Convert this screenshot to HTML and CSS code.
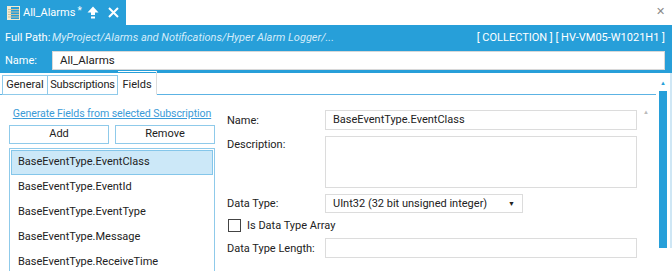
FILE: index.html
```html
<!DOCTYPE html>
<html lang="en">
<head>
    <meta charset="UTF-8">
    <title>All_Alarms</title>
    <link rel="stylesheet" href="styles.css">
</head>
<body>
    <div class="doc-bar">
        <div class="doc-tab">
            <svg class="doc-icon" width="13" height="14" viewBox="0 0 13 14">
                <rect x="0.5" y="0.5" width="12" height="13" fill="none" stroke="#f2ead0"/>
                <rect x="1" y="1" width="3" height="12" fill="#f2ead0"/>
                <path d="M4 3.5h8M4 6h8M4 8.5h8M4 11h8M1 3.5h3M1 6h3M1 8.5h3M1 11h3" stroke="#c9bf9f" stroke-width="1"/>
            </svg>
            <span class="doc-title">All_Alarms</span>
            <span class="doc-dirty">*</span>
            <svg class="doc-btn" width="12" height="13" viewBox="0 0 12 13">
                <path d="M6 0.5L11.5 6.5H8V9H4V6.5H0.5Z" fill="#fff"/>
                <rect x="4" y="10.5" width="4" height="2" fill="#fff"/>
            </svg>
            <svg class="doc-btn" width="11" height="11" viewBox="0 0 11 11">
                <path d="M1 1L10 10M10 1L1 10" stroke="#fff" stroke-width="2"/>
            </svg>
        </div>
        <span class="close-all">&#x2715;</span>
    </div>

    <div class="header">
        <div class="path-row">
            <span class="head-label">Full Path:</span>
            <span class="path">MyProject/Alarms and Notifications/Hyper Alarm Logger/...</span>
            <span class="meta">[ COLLECTION ] [ HV-VM05-W1021H1 ]</span>
        </div>
        <div class="name-row">
            <span class="head-label">Name:</span>
            <div class="name-input">All_Alarms</div>
        </div>
    </div>

    <div class="body-area">
        <div class="main">
            <div class="tab-strip">
                <div class="tab tab-general">General</div>
                <div class="tab tab-subs">Subscriptions</div>
                <div class="tab tab-active">Fields</div>
            </div>
            <div class="content">
                <div class="left-panel">
                    <a class="gen-link" href="#">Generate Fields from selected Subscription</a>
                    <div class="btn-row">
                        <div class="btn">Add</div>
                        <div class="btn">Remove</div>
                    </div>
                    <div class="field-list">
                        <div class="field-item selected">BaseEventType.EventClass</div>
                        <div class="field-item">BaseEventType.EventId</div>
                        <div class="field-item">BaseEventType.EventType</div>
                        <div class="field-item">BaseEventType.Message</div>
                        <div class="field-item">BaseEventType.ReceiveTime</div>
                    </div>
                </div>
                <div class="right-panel">
                    <div class="form-grid">
                        <span class="lbl">Name:</span>
                        <div class="inp">BaseEventType.EventClass</div>
                        <span class="lbl lbl-top">Description:</span>
                        <div class="inp area"></div>
                        <span class="lbl">Data Type:</span>
                        <div class="inp select">UInt32 (32 bit unsigned integer)<span class="caret">&#9660;</span></div>
                        <label class="check-row"><span class="check"></span>Is Data Type Array</label>
                        <span class="lbl">Data Type Length:</span>
                        <div class="inp"></div>
                    </div>
                    <span class="inner-arrow">&#9650;</span>
                </div>
            </div>
        </div>
        <div class="scrollbar">
            <span class="scroll-arrow">&#9650;</span>
            <div class="scroll-thumb"></div>
        </div>
    </div>
</body>
</html>
```

FILE: styles.css
```css
body {
    margin: 0;
    width: 672px;
    height: 271px;
    overflow: hidden;
    background: #fff;
    font-family: Roboto, "Open Sans", sans-serif;
    font-size: 11px;
    color: #333;
    white-space: nowrap;
}

/* document tab bar */
.doc-bar {
    height: 25px;
    display: flex;
    justify-content: space-between;
}

.doc-tab {
    width: 126px;
    box-sizing: border-box;
    background: #279fd9;
    display: flex;
    align-items: center;
    padding-left: 7px;
    color: #fff;
}

.doc-tab > * {
    flex-shrink: 0;
}

.doc-icon {
    margin-right: 3px;
}

.doc-title {
    font-size: 11px;
}

.doc-dirty {
    font-size: 10px;
    align-self: flex-start;
    margin: 5px 0 0 2px;
}

.doc-btn {
    margin-left: 5px;
}

.doc-btn + .doc-btn {
    margin-left: 9px;
}

.close-all {
    color: #8a8a8a;
    font-size: 11px;
    margin: 5px 7px 0 0;
}

/* blue header */
.header {
    background: #279fd9;
    color: #fff;
    padding: 0 7px 3px 5px;
}

.path-row {
    height: 25px;
    display: flex;
    align-items: center;
}

.head-label {
    width: 47px;
    flex-shrink: 0;
}

.path {
    font-style: italic;
    color: #d3ecfa;
}

.meta {
    margin-left: auto;
}

.name-row {
    display: flex;
    align-items: center;
    padding-top: 1px;
}

.name-input {
    flex: 1;
    height: 19px;
    box-sizing: border-box;
    background: #fff;
    border: 1px solid #d8d8d8;
    color: #222;
    padding: 1px 7px;
    font-size: 11.5px;
}

/* tabbed area */
.body-area {
    display: flex;
}

.main {
    width: 656px;
}

.tab-strip {
    height: 22px;
    display: flex;
    align-items: flex-end;
    padding-left: 2px;
    border-bottom: 1px solid #5cb3e4;
    box-sizing: border-box;
}

.tab {
    height: 20px;
    box-sizing: border-box;
    border: 1px solid #8fcaea;
    padding-top: 2px;
    margin-bottom: -1px;
    text-align: center;
    color: #222;
}

.tab + .tab {
    border-left: none;
}

.tab-general {
    width: 46px;
}

.tab-subs {
    width: 70px;
    letter-spacing: -0.2px;
}

.tab-active {
    width: 39px;
    height: 24px;
    border-color: #fff #dcdcdc #fff #fff;
    padding-top: 6px;
}

.content {
    display: flex;
}

.left-panel {
    width: 206px;
    margin-left: 9px;
    display: flex;
    flex-direction: column;
}

.gen-link {
    margin-top: 11px;
    text-align: center;
    color: #3b9bd8;
    font-size: 10.6px;
    line-height: 15px;
    letter-spacing: -0.1px;
}

.btn-row {
    display: flex;
    gap: 6px;
    margin-top: 4px;
}

.btn {
    flex: 1;
    height: 19px;
    box-sizing: border-box;
    border: 1px solid #8fcaea;
    text-align: center;
    line-height: 16px;
    color: #222;
}

.field-list {
    margin-top: 4px;
    height: 124px;
    border: 1px solid #8fcaea;
    border-bottom: none;
    padding: 1px;
    overflow: hidden;
}

.field-item {
    height: 25px;
    box-sizing: border-box;
    line-height: 24px;
    padding-left: 7px;
    color: #222;
}

.field-item.selected {
    background: #cce8f8;
    border: 1px solid #84c6ea;
    padding-left: 6px;
    line-height: 22px;
}

.right-panel {
    position: relative;
    margin-left: 12px;
    margin-top: 15px;
}

.form-grid {
    display: grid;
    grid-template-columns: 98px 312px;
    row-gap: 6px;
    align-items: center;
}

.lbl {
    color: #222;
}

.lbl-top {
    align-self: start;
    padding-top: 2px;
}

.inp {
    height: 20px;
    box-sizing: border-box;
    border: 1px solid #dcdcdc;
    padding: 2px 7px 0;
    color: #222;
}

.area {
    height: 52px;
}

.select {
    width: 198px;
    height: 19px;
    padding-top: 2px;
    display: flex;
    justify-content: space-between;
}

.caret {
    font-size: 7px;
    line-height: 14px;
    color: #222;
}

.check-row {
    grid-column: 1 / 3;
    display: flex;
    align-items: center;
    color: #222;
    height: 13px;
}

.check {
    width: 11px;
    height: 11px;
    border: 1px solid #444;
    margin: 0 6px 0 1px;
    background: #fff;
}

.inner-arrow {
    position: absolute;
    left: 416px;
    top: -2px;
    font-size: 6px;
    color: #bbb;
}

/* page scrollbar */
.scrollbar {
    width: 16px;
    height: 175px;
    display: flex;
    flex-direction: column;
    align-items: center;
    border-right: 2px solid #cfe7f5;
    box-sizing: border-box;
}

.scroll-arrow {
    font-size: 6px;
    color: #279fd9;
    margin-top: 6px;
    height: 12px;
}

.scroll-thumb {
    width: 8px;
    flex: 1;
    background: #279fd9;
}
```
